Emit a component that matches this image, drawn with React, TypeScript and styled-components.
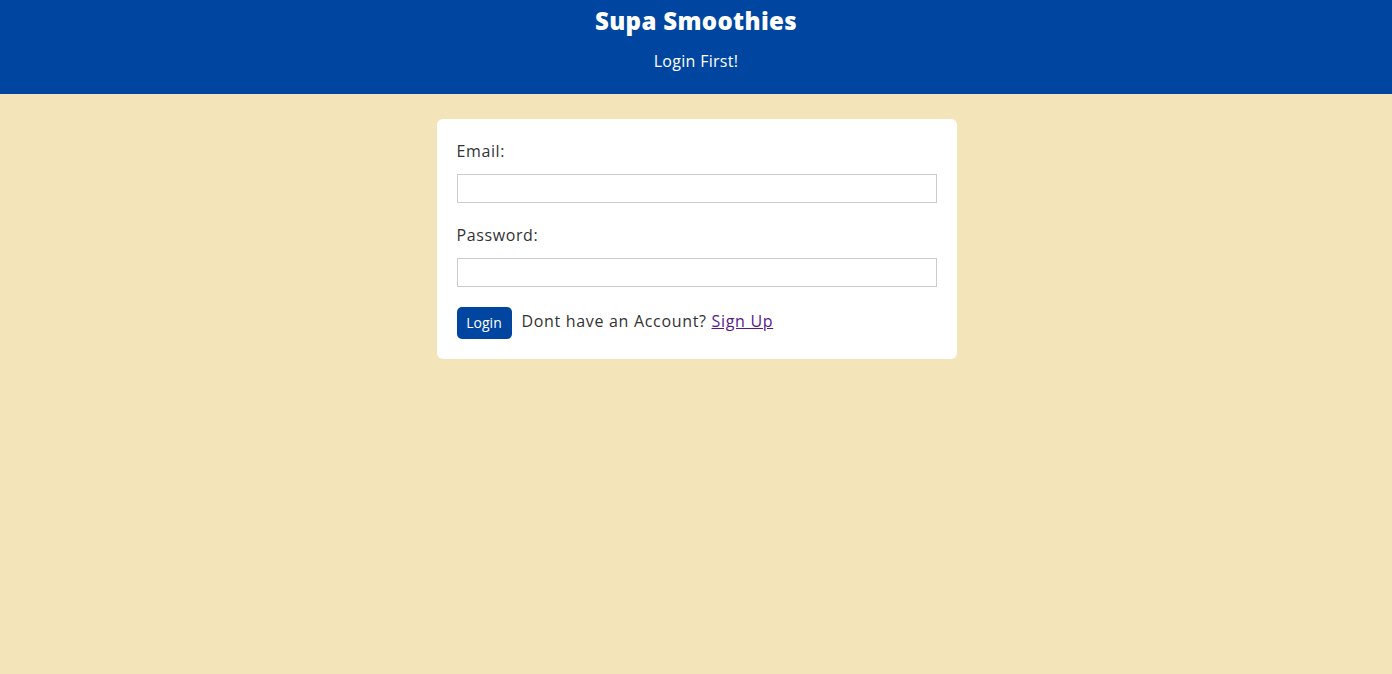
import React from "react";
import styled, { createGlobalStyle } from "styled-components";

const Global = createGlobalStyle`
  html, body { margin: 0; padding: 0; }
  body {
    background: #f4e4ba;
    font-family: "Open Sans", "Noto Sans", sans-serif;
    color: #333;
    min-height: 674px;
  }
  * { box-sizing: border-box; }
`;

const Header = styled.header`
  background: #0046a0;
  color: #fff;
  height: 94px;
  display: flex;
  flex-direction: column;
  align-items: center;
  padding-top: 5px;
`;

const Title = styled.h1`
  margin: 0;
  font-size: 24px;
  font-weight: 800;
  line-height: 32px;
  letter-spacing: 0.35px;
`;

const Subtitle = styled.p`
  margin: 12px 0 0;
  font-size: 16px;
  line-height: 24px;
  letter-spacing: 0.3px;
`;

const Main = styled.main`
  display: flex;
  justify-content: center;
  padding-top: 25px;
  padding-left: 1px;
`;

const Card = styled.form`
  width: 520px;
  background: #fff;
  border-radius: 6px;
  padding: 20px;
  display: flex;
  flex-direction: column;
`;

const Label = styled.label<{ $first?: boolean }>`
  font-size: 16px;
  line-height: 24px;
  letter-spacing: 0.6px;
  margin-top: ${(p) => (p.$first ? "0" : "20px")};
`;

const Input = styled.input`
  margin-top: 11px;
  height: 29px;
  width: 100%;
  border: 1px solid #ccc;
  padding: 4px 8px;
  font: inherit;
  outline: none;
`;

const Row = styled.div`
  margin-top: 20px;
  display: flex;
  align-items: center;
  gap: 10px;
  font-size: 16px;
  line-height: 24px;
`;

const Prompt = styled.span`
  letter-spacing: 0.68px;
  padding-bottom: 4px;
`;

const Button = styled.button`
  background: #0046a0;
  color: #fff;
  border: none;
  border-radius: 5px;
  width: 55px;
  height: 32px;
  padding: 0 0 2px;
  font-family: inherit;
  font-size: 14px;
  font-weight: 500;
`;

const Link = styled.a`
  color: #551a8b;
  text-decoration: underline;
`;

export default function App() {
  return (
    <>
      <Global />
      <Header>
        <Title>Supa Smoothies</Title>
        <Subtitle>Login First!</Subtitle>
      </Header>
      <Main>
        <Card onSubmit={(e) => e.preventDefault()}>
          <Label $first htmlFor="email">Email:</Label>
          <Input id="email" type="email" />
          <Label htmlFor="password">Password:</Label>
          <Input id="password" type="password" />
          <Row>
            <Button type="submit">Login</Button>
            <Prompt>
              Dont have an Account? <Link href="#">Sign Up</Link>
            </Prompt>
          </Row>
        </Card>
      </Main>
    </>
  );
}
